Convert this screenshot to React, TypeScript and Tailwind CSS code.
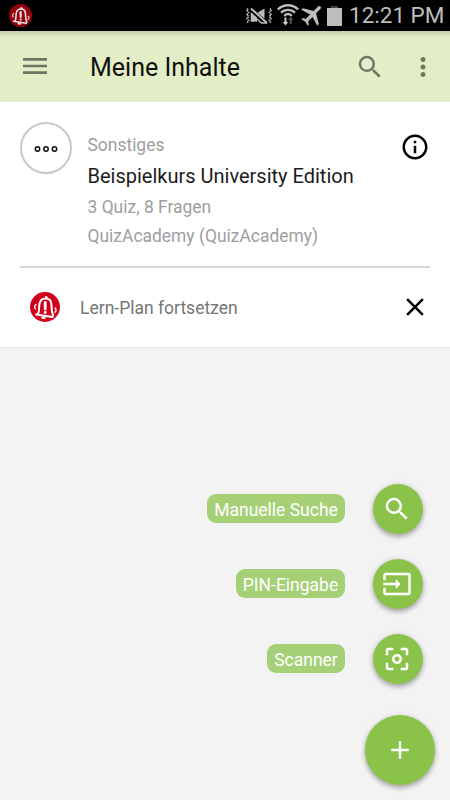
import type { ReactNode } from "react";
import {
  MdAdd,
  MdAirplanemodeActive,
  MdCenterFocusWeak,
  MdClose,
  MdInfoOutline,
  MdInput,
  MdMenu,
  MdMoreVert,
  MdSearch,
} from "react-icons/md";

const actions = [
  { label: "Manuelle Suche", width: "w-[138px]", icon: <MdSearch size={30} /> },
  { label: "PIN-Eingabe", width: "w-[109px]", icon: <MdInput size={30} /> },
  { label: "Scanner", width: "w-[78px]", icon: <MdCenterFocusWeak size={30} /> },
];

function BellIcon({ className }: { className: string }) {
  return (
    <svg viewBox="0 0 30 30" fill="none" className={className}>
      <circle cx="15" cy="15" r="15" fill="currentColor" />
      <g stroke="#fff" strokeLinecap="round" strokeLinejoin="round">
        <path
          d="M6 22.500 22.500 25M8 22c1.600-3.200.8-6.800 1.500-10.300C10.200 8 12.600 6.500 15.600 6.500c3.600 0 5.700 2.500 5.800 6 .1 4 .3 7.700 1.800 11"
          strokeWidth="2"
        />
        <path d="M15.200 10.500v6.500" strokeWidth="2.800" />
        <path d="M15.200 20.300v.2" strokeWidth="2.800" />
        <path d="M16.200 5.200v.8" strokeWidth="2.600" />
        <path d="M12.400 25.600l2.200.4" strokeWidth="2.200" />
        <path
          d="M6 12.600c-1.600.8-1.800 2.800-.6 4.300M25 16c1.400 1 1.500 2.800 0 4.200"
          strokeWidth="1.400"
        />
      </g>
    </svg>
  );
}

function MutedIcon() {
  return (
    <svg viewBox="0 0 26 18" className="h-[18px] w-[26px]" fill="none">
      <path
        d="M2 1.500l-1.200 2 2 2-2 2 2 2-2 2 2 2-2 2.500M24 1.500l1.200 2-2 2 2 2-2 2 2 2-2 2 2 2.500"
        stroke="#bdbdbd"
        strokeWidth="1.500"
        strokeDasharray="1.600 .6"
      />
      <path d="M5.500 4v10h3.500l2 1V9zM11 6l7.500-4.500v10z" fill="#bdbdbd" />
      <path d="M4.500 2l15.500 14" stroke="#000" strokeWidth="4" />
      <path d="M5 1.500l16 14.500" stroke="#bdbdbd" strokeWidth="2" />
      <path d="M5.500 6v8h4M11 12l4.500 4H21" stroke="#bdbdbd" strokeWidth="1.500" />
    </svg>
  );
}

function WifiIcon() {
  return (
    <svg viewBox="0 0 22 22" className="h-[22px] w-[22px]" fill="none">
      <g stroke="#bdbdbd" strokeWidth="2.300">
        <path d="M.8 5.500C6.500-.2 15.500-.2 21.200 5.500" />
        <path d="M4 8.700c4-3.900 10-3.900 14 0" />
        <path d="M7.200 11.800c2.300-2.100 5.300-2.100 7.600 0" />
      </g>
      <path d="M7.500 13.500h2v4.500h1.700l-2.700 3.500L5.800 18h1.700z" fill="#d0d0d0" />
      <path d="M12.700 20v-4H11l2.700-3.500 2.700 3.500h-1.700v4z" fill="#555" />
    </svg>
  );
}

function StatusBar() {
  return (
    <header className="flex h-[31px] shrink-0 items-center bg-black pr-1.5 pl-[9px] text-[#bdbdbd]">
      <BellIcon className="h-[23px] w-[23px] text-[#a9000e] opacity-90" />
      <div className="ml-auto flex items-center">
        <MutedIcon />
        <div className="ml-[5px] pb-px">
          <WifiIcon />
        </div>
        <MdAirplanemodeActive className="mb-0.5 rotate-45" size={27} />
        <svg viewBox="0 0 15 20" className="ml-px h-5 w-[15px]">
          <path d="M4 0h7v2H4z" fill="#444" />
          <path d="M0 2h15v18H0z" fill="currentColor" />
        </svg>
        <span className="ml-[7px] w-[95px] text-[22.500px] leading-[31px] whitespace-nowrap">
          12:21 PM
        </span>
      </div>
    </header>
  );
}

function AppBar() {
  return (
    <nav className="flex h-[71px] shrink-0 items-center bg-[#e3eec6] bg-linear-to-b from-[#c3cdab] to-[#e3eec6] to-[7px] pr-3 pl-[19px] text-[#6f7562]">
      <MdMenu className="mb-px" size={32} />
      <h1 className="ml-[39px] pt-[3px] text-[25px] leading-8 whitespace-nowrap text-[#111]">
        Meine Inhalte
      </h1>
      <MdSearch className="ml-auto" size={30} />
      <MdMoreVert className="ml-[23px]" size={30} />
    </nav>
  );
}

function Fab({ className, children }: { className: string; children: ReactNode }) {
  return (
    <button
      className={`flex items-center justify-center rounded-full bg-[#8bc34a] text-white shadow-[0_3px_5px_rgba(0,0,0,0.28),0_0_6px_rgba(0,0,0,0.1)] ${className}`}
    >
      {children}
    </button>
  );
}

export default function App() {
  return (
    <div className="flex h-[800px] w-[450px] flex-col overflow-hidden bg-[#f3f3f3] font-[Roboto,sans-serif]">
      <StatusBar />
      <AppBar />
      <section className="h-[246px] shrink-0 border-b border-[#e9e9e9] bg-white px-5 pt-5">
        <div className="flex h-[146px] items-start border-b-2 border-[#d6d6d6]">
          <div className="flex h-[52px] w-[52px] shrink-0 items-center justify-center rounded-full border-2 border-[#c8c8c8]">
            <svg viewBox="0 0 24 8" className="mt-0.5 h-2 w-6" fill="none">
              <g stroke="#111" strokeWidth="1.500">
                <circle cx="3.500" cy="4" r="2.200" />
                <circle cx="12" cy="4" r="2.200" />
                <circle cx="20.500" cy="4" r="2.200" />
              </g>
            </svg>
          </div>
          <div className="ml-[15.500px] pt-[9px] text-[17.450px] whitespace-nowrap text-[#9e9e9e]">
            <p className="h-[30px] leading-[28px]">Sonstiges</p>
            <h2 className="h-[31px] text-[20px] leading-[30px] text-[#1b1b1b]">
              Beispielkurs University Edition
            </h2>
            <p className="h-[30px] leading-[30px]">3 Quiz, 8 Fragen</p>
            <p className="leading-[28px]">QuizAcademy (QuizAcademy)</p>
          </div>
          <MdInfoOutline className="mt-[10px] ml-auto" size={30} />
        </div>
        <div className="flex h-[78px] items-center pl-[10px]">
          <BellIcon className="h-[30px] w-[30px] text-[#d0021b]" />
          <span className="ml-5 pt-0.5 text-[17.500px] text-[#757575]">
            Lern-Plan fortsetzen
          </span>
          <MdClose className="ml-auto" size={30} />
        </div>
      </section>
      <main className="flex grow flex-col items-end">
        <div className="mt-[136px] flex flex-col gap-[25px] pr-[27.500px]">
          {actions.map(({ label, width, icon }) => (
            <div key={label} className="flex items-center justify-end gap-[27.500px]">
              <span
                className={`mb-[2px] flex h-[29px] items-center justify-center rounded-[9px] bg-[#a5d076] pt-[5px] pb-px text-[17.500px] whitespace-nowrap text-white ${width}`}
              >
                {label}
              </span>
              <Fab className="h-[50px] w-[50px] pr-px">{icon}</Fab>
            </div>
          ))}
        </div>
        <Fab className="mt-[31px] mr-[15px] h-[70px] w-[70px]">
          <MdAdd size={30} />
        </Fab>
      </main>
    </div>
  );
}
